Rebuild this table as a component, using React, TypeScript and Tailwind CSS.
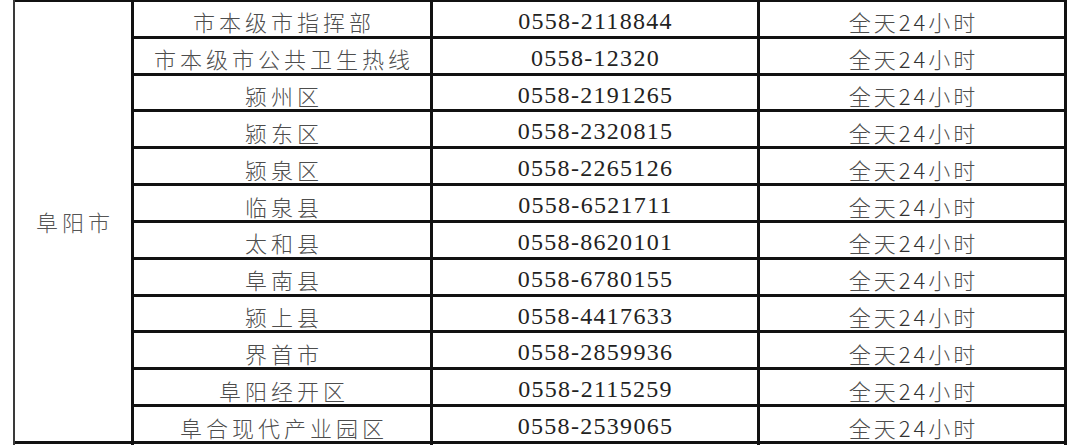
import React from "react";

const rows: [string, string][] = [
  ["市本级市指挥部", "0558-2118844"],
  ["市本级市公共卫生热线", "0558-12320"],
  ["颍州区", "0558-2191265"],
  ["颍东区", "0558-2320815"],
  ["颍泉区", "0558-2265126"],
  ["临泉县", "0558-6521711"],
  ["太和县", "0558-8620101"],
  ["阜南县", "0558-6780155"],
  ["颍上县", "0558-4417633"],
  ["界首市", "0558-2859936"],
  ["阜阳经开区", "0558-2115259"],
  ["阜合现代产业园区", "0558-2539065"],
];

const cjk = { fontFamily: '"Noto Sans CJK SC", "Noto Sans", sans-serif' };
const serif = { fontFamily: '"Liberation Serif", "Noto Sans CJK SC", serif' };

export default function App() {
  return (
    <div className="w-[1080px] h-[445px] overflow-hidden bg-white">
      <div
        className="ml-[13px] w-[1054px] bg-[#111] pt-[2px] pr-[3px] border-l-2 border-[#3a3a3a] grid gap-[3px] grid-cols-[116px_296px_324px_304px] grid-rows-[repeat(13,33.83px)]"
      >
        <div
          className="row-span-12 bg-white flex items-center justify-center text-[22px] tracking-[4px] pl-[4px] text-[#555] font-light"
          style={cjk}
        >
          阜阳市
        </div>
        {rows.map(([name, phone], i) => (
          <React.Fragment key={i}>
            <div
              className="bg-white flex items-center justify-center pt-[5px] pl-[4px] text-[22px] leading-none tracking-[4px] text-[#4d4d4d] font-light whitespace-nowrap"
              style={cjk}
            >
              {name}
            </div>
            <div
              className="bg-white flex items-center justify-center pt-[4px] pl-[1px] text-[24px] leading-none tracking-[1.3px] text-[#222]"
              style={serif}
            >
              {phone}
            </div>
            <div
              className="bg-white flex items-center justify-center pt-[5px] pl-[3px] text-[22px] leading-none tracking-[3px] text-[#4d4d4d] font-light whitespace-nowrap"
              style={cjk}
            >
              全天<span className="text-[#333]">24</span>小时
            </div>
          </React.Fragment>
        ))}
        <div className="bg-white" />
        <div className="bg-white" />
        <div className="bg-white" />
        <div className="bg-white" />
      </div>
    </div>
  );
}
